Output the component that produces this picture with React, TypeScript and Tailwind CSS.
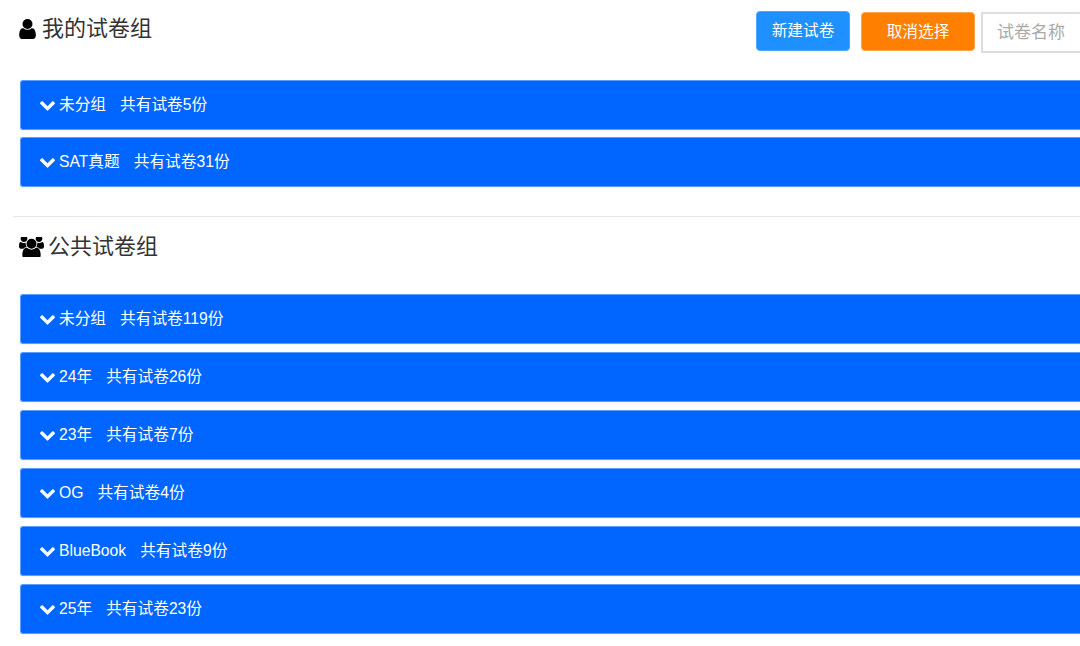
const mine = [
  { name: "未分组", count: 5 },
  { name: "SAT真题", count: 31 },
];

const pub = [
  { name: "未分组", count: 119 },
  { name: "24年", count: 26 },
  { name: "23年", count: 7 },
  { name: "OG", count: 4 },
  { name: "BlueBook", count: 9 },
  { name: "25年", count: 23 },
];

function ChevronIcon() {
  return (
    <svg viewBox="90 430 1612 1140" className="mr-[4px] h-[11px] w-[15px] shrink-0" fill="currentColor">
      <path d="M1683 808l-742 741q-19 19-45 19t-45-19l-742-741q-19-19-19-45.500t19-45.500l166-165q19-19 45-19t45 19l531 531 531-531q19-19 45-19t45 19l166 165q19 19 19 45.500t-19 45.500z" />
    </svg>
  );
}

function UserIcon() {
  return (
    <svg viewBox="256 128 1280 1536" className="h-[20px] w-[17px] shrink-0 text-black" fill="currentColor">
      <path d="M1536 1399q0 109-62.500 187t-150.500 78h-854q-88 0-150.500-78t-62.500-187q0-85 8.500-160.500t31.500-152 58.500-131 94-89 134.500-34.500q131 128 313 128t313-128q76 0 134.500 34.500t94 89 58.500 131 31.500 152 8.500 160.500zm-256-887q0 159-112.500 271.500t-271.500 112.500-271.500-112.500-112.500-271.500 112.500-271.500 271.500-112.500 271.500 112.500 112.500 271.500z" />
    </svg>
  );
}

function UsersIcon() {
  return (
    <svg viewBox="0 128 1920 1536" className="h-[20px] w-[25px] shrink-0 text-black" fill="currentColor">
      <path d="M593 896q-162 5-265 128h-134q-82 0-138-40.500t-56-118.500q0-353 124-353 6 0 43.500 21t97.500 42.500 119 21.500q67 0 133-23-5 37-5 66 0 139 81 256zm1071 637q0 120-73 189.500t-194 69.500h-874q-121 0-194-69.500t-73-189.500q0-53 3.500-103.500t14-109 26.500-108.500 43-97.500 62-81 85.500-53.500 111.500-20q10 0 43 21.500t73 48 107 48 135 21.500 135-21.500 107-48 73-48 43-21.500q61 0 111.500 20t85.500 53.500 62 81 43 97.500 26.500 108.500 14 109 3.500 103.500zm-1024-1277q0 106-75 181t-181 75-181-75-75-181 75-181 181-75 181 75 75 181zm704 384q0 159-112.500 271.500t-271.500 112.500-271.500-112.500-112.500-271.500 112.500-271.500 271.500-112.500 271.500 112.500 112.500 271.500zm576 225q0 78-56 118.500t-138 40.500h-134q-103-123-265-128 81-117 81-256 0-29-5-66 66 23 133 23 59 0 119-21.500t97.500-42.500 43.500-21q124 0 124 353zm-128-609q0 106-75 181t-181 75-181-75-75-181 75-181 181-75 181 75 75 181z" />
    </svg>
  );
}

function GroupRow({ name, count }: { name: string; count: number }) {
  return (
    <div className="flex h-[50px] items-center rounded-l-[3px] border border-r-0 border-[#5c9dff] bg-[#0066ff] pl-[19px] text-[15.7px] text-white shadow-[0_1px_1px_rgba(0,0,0,0.05)]">
      <ChevronIcon />
      <span>{name}</span>
      <span className="ml-[14px]">共有试卷{count}份</span>
    </div>
  );
}

export default function App() {
  return (
    <div
      className="h-[646px] w-[1080px] overflow-hidden bg-white text-[#333]"
      style={{ fontFamily: '"Liberation Sans", "Noto Sans CJK SC", sans-serif' }}
    >
      <div className="flex h-[80px] items-start pl-[19px]">
        <h3 className="mt-[14px] flex items-center gap-[6px] text-[22px] leading-[30px] font-normal">
          <UserIcon />
          我的试卷组
        </h3>
        <div className="ml-auto mt-[11px] flex items-start">
          <button className="h-[40px] w-[94px] rounded-[4px] border border-[#4da6ff] bg-[#1e90ff] text-[15.7px] text-white">
            新建试卷
          </button>
          <button className="ml-[11px] mt-[1px] h-[39px] w-[114px] rounded-[4px] border border-[#ffa64d] bg-[#ff8000] text-[15.7px] text-white">
            取消选择
          </button>
          <input
            readOnly
            placeholder="试卷名称"
            className="ml-[6px] mt-[1px] h-[41px] w-[99px] border-2 border-r-0 border-[#ddd] bg-white pl-[14px] text-[17px] placeholder:text-[#aaa]"
          />
        </div>
      </div>

      <div className="flex flex-col gap-[7px] pl-[20px]">
        {mine.map((g) => (
          <GroupRow key={g.name} {...g} />
        ))}
      </div>

      <hr className="ml-[13px] mt-[29px] border-t border-[#e8e8e8]" />

      <h3 className="ml-[19px] mt-[15px] flex items-center gap-[4px] text-[22px] leading-[30px] font-normal">
        <UsersIcon />
        公共试卷组
      </h3>

      <div className="mt-[32px] flex flex-col gap-[8px] pl-[20px]">
        {pub.map((g) => (
          <GroupRow key={g.name} {...g} />
        ))}
      </div>
    </div>
  );
}
